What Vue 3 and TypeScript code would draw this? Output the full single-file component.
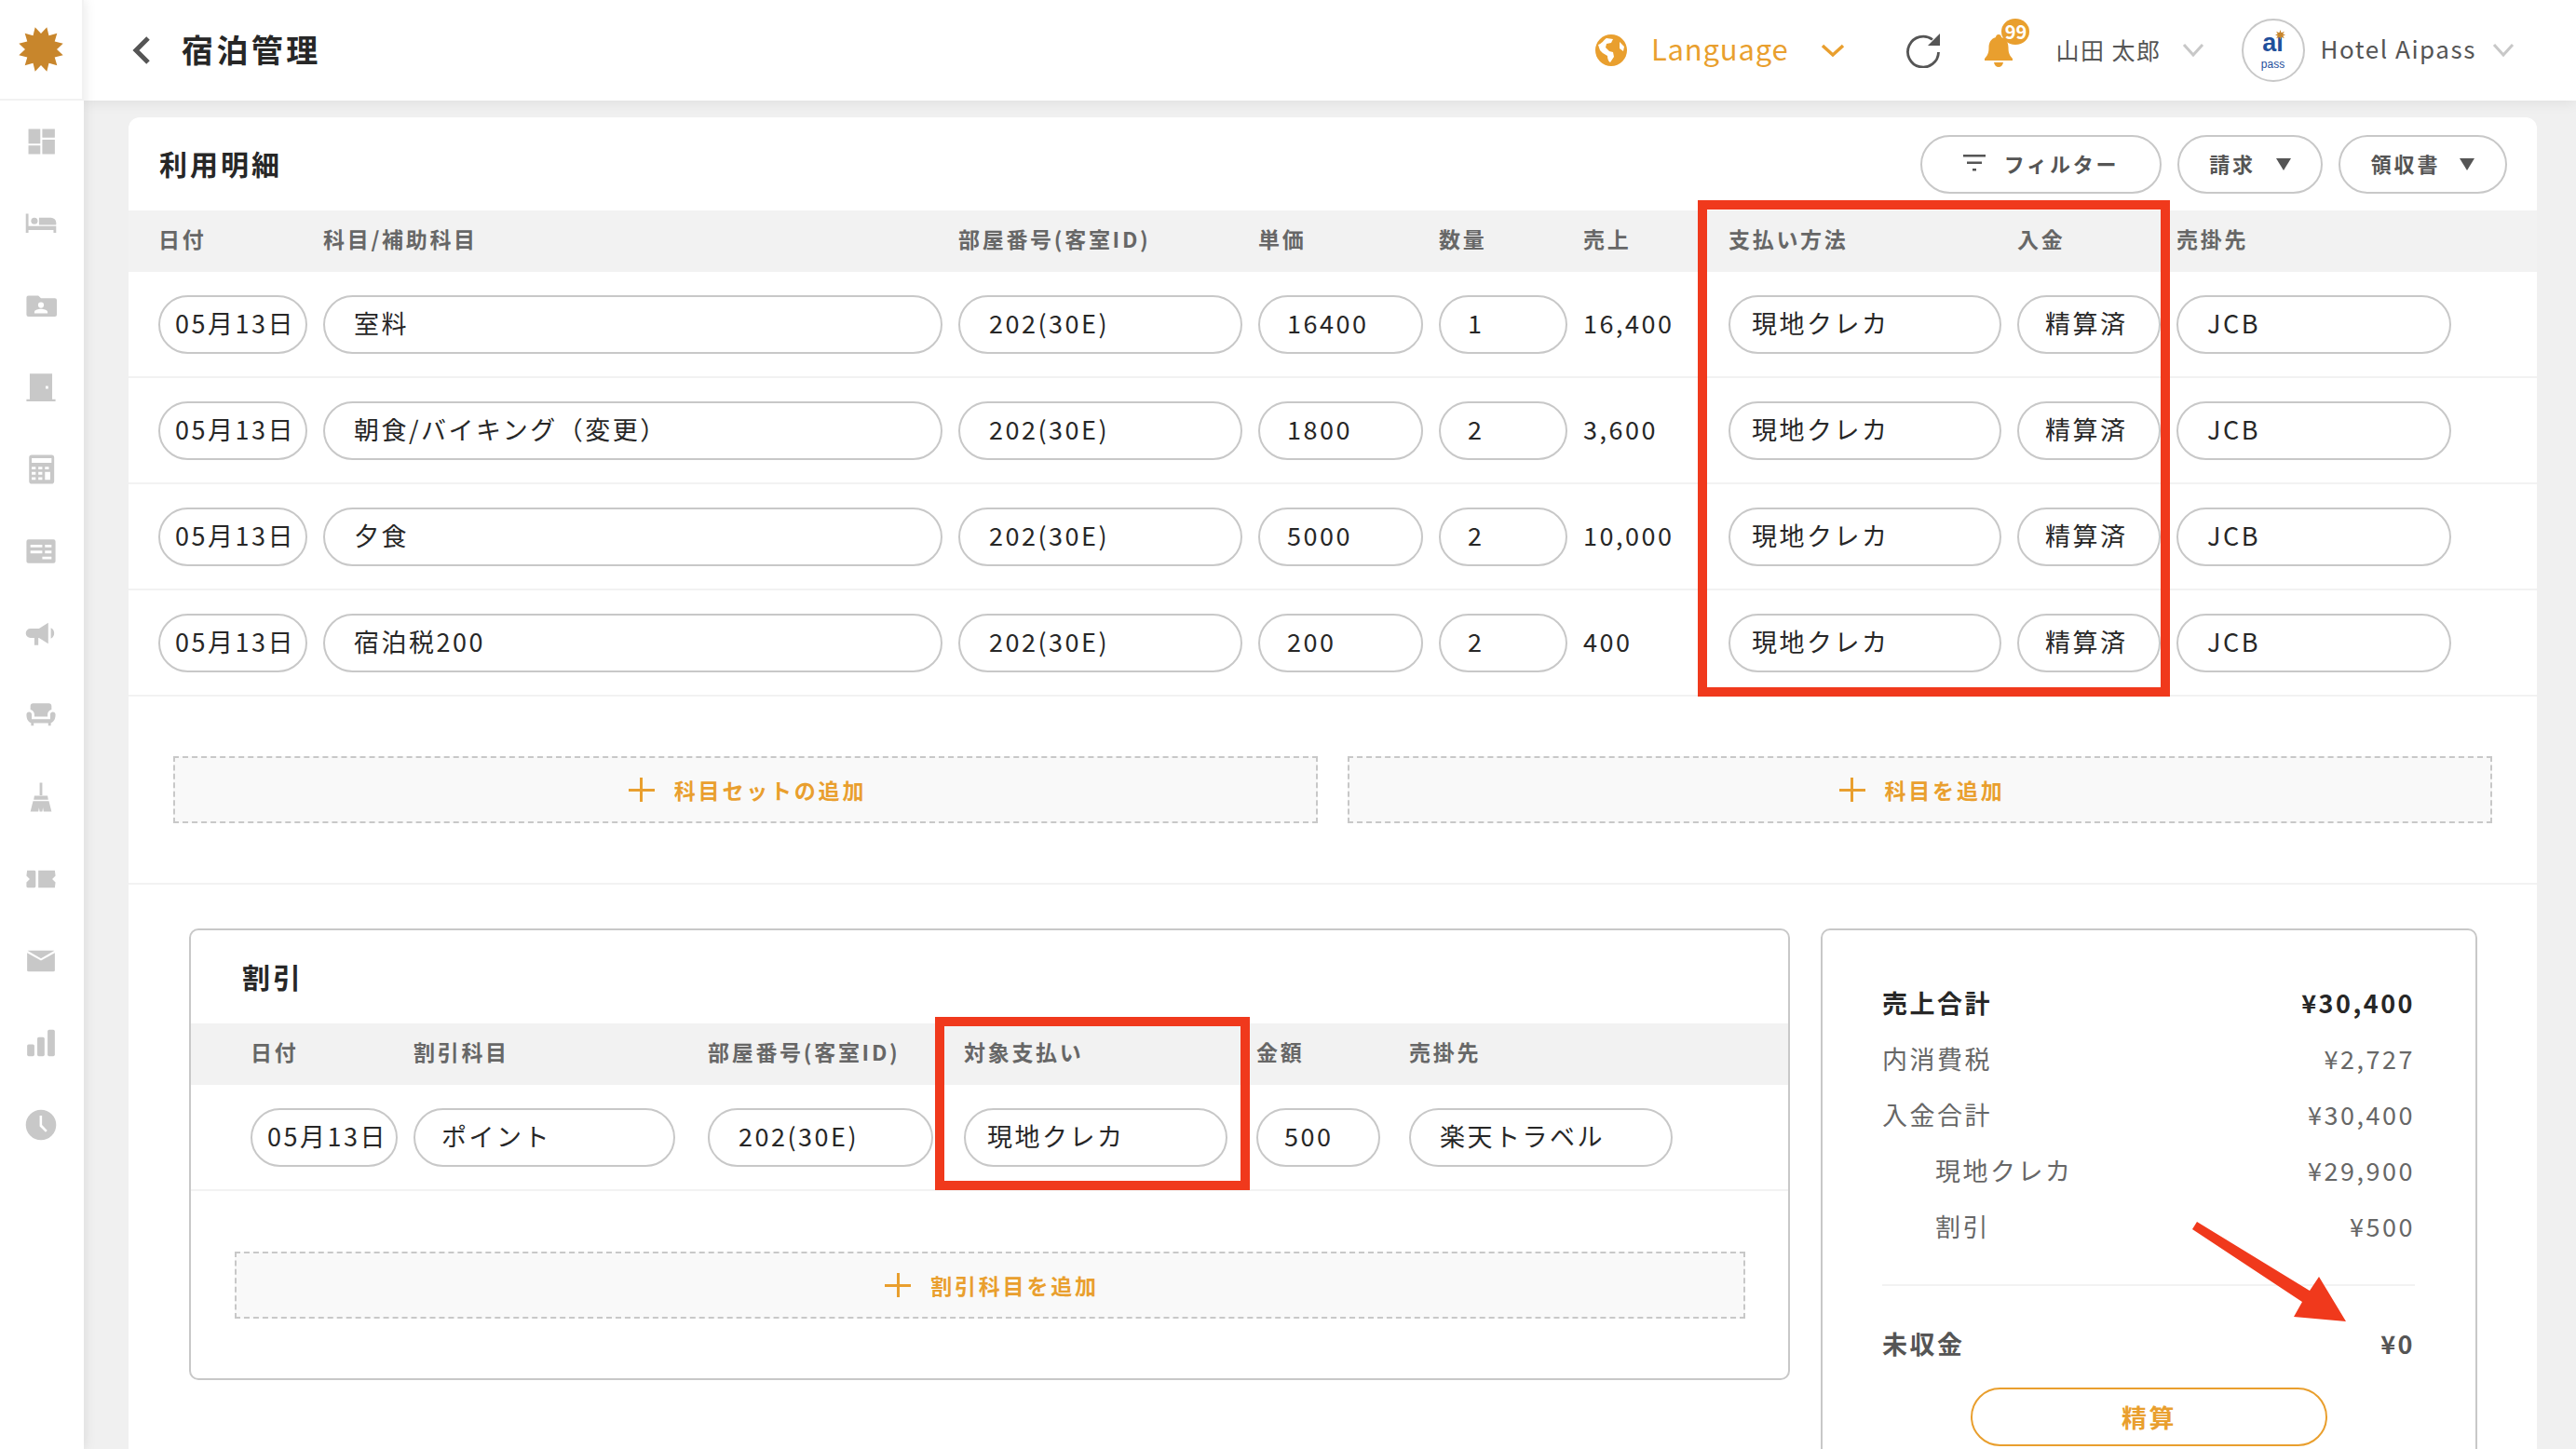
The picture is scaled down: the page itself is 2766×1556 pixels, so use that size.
<script setup lang="ts">
interface Line { name: string; price: string; qty: string; sales: string }

const lines: Line[] = [
  { name: '室料', price: '16400', qty: '1', sales: '16,400' },
  { name: '朝食/バイキング（変更）', price: '1800', qty: '2', sales: '3,600' },
  { name: '夕食', price: '5000', qty: '2', sales: '10,000' },
  { name: '宿泊税200', price: '200', qty: '2', sales: '400' },
]

// logo: 12 pointed star
const starPoints = Array.from({ length: 24 }, (_, i) => {
  const r = i % 2 === 0 ? 24.5 : 17
  const a = (i * Math.PI) / 12 - Math.PI / 2 + Math.PI / 12
  return `${(25 + r * Math.cos(a)).toFixed(1)},${(25 + r * Math.sin(a)).toFixed(1)}`
}).join(' ')
</script>

<template>
  <div class="app">
    <aside class="side">
      <div class="logo">
        <svg width="50" height="50" viewBox="0 0 50 50"><polygon :points="starPoints" fill="#c8862c" /></svg>
      </div>
      <nav class="nav">
        <div class="nav-item"><svg viewBox="0 0 24 24"><path d="M2.500 2.500h9v11h-9zM2.500 15h9v6.500h-9zM13 2.500h9.500V9H13zM13 10.500h9.500v11H13z" /></svg></div>
        <div class="nav-item"><svg viewBox="0 0 24 24"><path d="M0.500 4.500h2v9.500h21v5h-2v-2H2.500v2h-2z" /><circle cx="7" cy="10" r="2.500" /><path d="M10.500 7.500h9a4 4 0 0 1 4 4V13h-13z" /></svg></div>
        <div class="nav-item"><svg viewBox="0 0 24 24"><path fill-rule="evenodd" d="M22 6.500h-10l-2-2H2.500a1.500 1.500 0 0 0-1.500 1.500v13a1.500 1.500 0 0 0 1.500 1.500h20a1.500 1.500 0 0 0 1.500-1.500V8a1.500 1.500 0 0 0-1.500-1.500zM12 9.500a2.200 2.200 0 1 1 0 4.400 2.200 2.200 0 0 1 0-4.400zM17 18H7v-1c0-1.600 3.300-2.300 5-2.300s5 .7 5 2.300z" /></svg></div>
        <div class="nav-item"><svg viewBox="0 0 24 24"><path fill-rule="evenodd" d="M3.500 1.500h17V21H23v1.500H1V21h2.500zM15.500 11h2v2h-2z" /></svg></div>
        <div class="nav-item"><svg viewBox="0 0 24 24"><path fill-rule="evenodd" d="M5 1h15a2 2 0 0 1 2 2v18a2 2 0 0 1-2 2H5a2 2 0 0 1-2-2V3a2 2 0 0 1 2-2zM5 3.500v3.500h15V3.500zM5 10v2h3v-2zM10 10v2h3v-2zM15 10v2h3v-2zM5 14v2h3v-2zM10 14v2h3v-2zM15 14v6h4v-6zM5 18v2h3v-2zM10 18v2h3v-2z" /></svg></div>
        <div class="nav-item"><svg viewBox="0 0 24 24"><path fill-rule="evenodd" d="M2.500 3h19A1.500 1.500 0 0 1 23 4.500v15a1.500 1.500 0 0 1-1.500 1.500h-19A1.500 1.500 0 0 1 1 19.500v-15A1.500 1.500 0 0 1 2.500 3zM4 7v2h9V7zM4 11.500v2h9v-2zM15 7v2h5V7zM15 11.500v2h5v-2zM13 16v2h7v-2z" /></svg></div>
        <div class="nav-item"><svg viewBox="0 0 24 24"><path d="M4 8.500a3.500 3.500 0 0 0 0 7h3V21h3v-5.500h.5L17.500 20V4l-7 4.500zM19.500 8v8c1.700-.8 2.500-2.300 2.500-4s-.8-3.200-2.500-4z" /></svg></div>
        <div class="nav-item"><svg viewBox="0 0 24 24"><path d="M21 9.500c-1.100 0-2 .9-2 2V15H5v-3.500c0-1.100-.9-2-2-2s-2 .9-2 2c0 3 1 5.500 3.500 6.500v2h2v-2h11v2h2v-2c2.500-1 3.500-3.500 3.500-6.500 0-1.100-.9-2-2-2zM18 3H6C4.900 3 4 3.900 4 5v2.800c1.900.5 3 1.900 3 3.700V13h10v-1.500c0-1.800 1.100-3.200 3-3.700V5c0-1.100-.9-2-2-2z" /></svg></div>
        <div class="nav-item"><svg viewBox="0 0 24 24"><path d="M11 1h2v9.500h-2zM7 11h10l.5 3h-11zM6 15h12l2 8h-6l-.5-3-.5 3h-2l-.5-3-.5 3H4z" /></svg></div>
        <div class="nav-item"><svg viewBox="0 0 24 24"><path d="M1.500 5.500H7a1 1 0 0 1 1 1v11a1 1 0 0 1-1 1H2a1 1 0 0 1-1-1V14.500l2.500-2.500L1 9.500zM10 5.500h12.500L23 9.500 20.500 12l2.500 2.500-.5 4H10z" /></svg></div>
        <div class="nav-item"><svg viewBox="0 0 24 24"><path d="M1.500 5.800 12 11.700 22.500 5.800V19a1 1 0 0 1-1 1h-19a1 1 0 0 1-1-1zM2 4h20v.2L12 10 2 4.200z" /></svg></div>
        <div class="nav-item"><svg viewBox="0 0 24 24"><rect x="1.500" y="13" width="5.500" height="9" rx="1.200" /><rect x="9.200" y="7.500" width="5.500" height="14.500" rx="1.200" /><rect x="17" y="2" width="5.500" height="20" rx="1.200" /></svg></div>
        <div class="nav-item"><svg viewBox="0 0 24 24"><path fill-rule="evenodd" d="M12 0.500a11.500 11.500 0 1 1 0 23 11.500 11.500 0 0 1 0-23zM11 5v8l4.500 4.500 1.300-1.300-4-4.200V5z" /></svg></div>
      </nav>
    </aside>

    <div class="main">
      <header class="top">
        <svg class="back" width="20" height="32" viewBox="0 0 20 32"><path d="M17 3 4 16l13 13" fill="none" stroke="#555" stroke-width="5" /></svg>
        <h1 class="page-title">宿泊管理</h1>
        <div class="top-right">
          <svg class="globe" width="36" height="36" viewBox="0 0 36 36">
            <circle cx="18" cy="18" r="17" fill="#e99f2e" />
            <path d="M4 12c4-1 6-5 9-7l7 1-2 4-5 1-1 4 4 4 4 1 1 5-4 6c-2-1-3-4-3-7l-5-3-3-3zM27 9l5 5-1 5-4-3z" fill="#fff" />
          </svg>
          <span class="lang">Language</span>
          <svg class="lang-chev" width="26" height="15" viewBox="0 0 26 15"><path d="M2 2l11 10L24 2" fill="none" stroke="#e99f2e" stroke-width="3.500" /></svg>
          <svg class="reload" width="40" height="38" viewBox="0 0 40 38">
            <path d="M30 7.500A16.500 16.500 0 1 0 36.500 21" fill="none" stroke="#555" stroke-width="2.800" />
            <path d="M38 1v13H25z" fill="#555" />
          </svg>
          <div class="bell">
            <svg width="32" height="36" viewBox="0 0 32 36">
              <path d="M16 1c2 0 3 1.500 3 3 5 1.500 7.500 5.500 7.500 11 0 5.500 1 8 4.500 12v2H1v-2c3.500-4 4.500-6.500 4.500-12C5.500 9.500 8 5.500 13 4c0-1.500 1-3 3-3z" fill="#e99f2e" />
              <path d="M11 31h10c-.5 3-2.500 5-5 5s-4.500-2-5-5z" fill="#e99f2e" />
            </svg>
            <span class="badge">99</span>
          </div>
          <span class="user">山田 太郎</span>
          <svg class="grey-chev user-chev" width="24" height="14" viewBox="0 0 24 14"><path d="M2 1l10 11L22 1" fill="none" stroke="#c8c8c8" stroke-width="3" /></svg>
          <div class="avatar">
            <svg class="avatar-star" width="11" height="11" viewBox="0 0 10 10"><polygon points="5,0 6,3 9,1.500 7.500,4 10,5 7.500,6 9,8.500 6,7 5,10 4,7 1,8.500 2.500,6 0,5 2.500,4 1,1.500 4,3" fill="#c8862c" /></svg>
            <span class="ai">ai</span>
            <span class="pass">pass</span>
          </div>
          <span class="hotel">Hotel Aipass</span>
          <svg class="grey-chev hotel-chev" width="24" height="14" viewBox="0 0 24 14"><path d="M2 1l10 11L22 1" fill="none" stroke="#c8c8c8" stroke-width="3" /></svg>
        </div>
      </header>

      <div class="content">
        <section class="card">
          <div class="card-head">
            <h2 class="card-title">利用明細</h2>
            <div class="actions">
              <button class="act act-filter">
                <svg width="24" height="18" viewBox="0 0 24 18"><path d="M0 0h24v2.500H0zM4 7.500h16V10H4zM10 15h4v2.500h-4z" fill="#555" /></svg>
                フィルター
              </button>
              <button class="act act-bill">請求<i class="caret" /></button>
              <button class="act act-receipt">領収書<i class="caret" /></button>
            </div>
          </div>

          <div class="grid thead">
            <span>日付</span><span>科目/補助科目</span><span>部屋番号(客室ID)</span><span>単価</span><span>数量</span><span>売上</span><span>支払い方法</span><span>入金</span><span>売掛先</span>
          </div>
          <div v-for="line in lines" :key="line.name" class="grid row">
            <div class="pill pill-date">05月13日</div>
            <div class="pill pad-33">{{ line.name }}</div>
            <div class="pill pad-33">202(30E)</div>
            <div class="pill pad-31">{{ line.price }}</div>
            <div class="pill pad-31">{{ line.qty }}</div>
            <div class="cell-text">{{ line.sales }}</div>
            <div class="pill pad-24">現地クレカ</div>
            <div class="pill pad-30">精算済</div>
            <div class="pill pad-33">JCB</div>
          </div>

          <div class="add-row">
            <button class="add"><span class="plus" />科目セットの追加</button>
            <button class="add"><span class="plus" />科目を追加</button>
          </div>

          <div class="lower">
            <section class="panel discount">
              <h3 class="panel-title">割引</h3>
              <div class="dgrid thead">
                <span>日付</span><span>割引科目</span><span>部屋番号(客室ID)</span><span>対象支払い</span><span>金額</span><span>売掛先</span>
              </div>
              <div class="dgrid row">
                <div class="cell"><div class="pill pill-date">05月13日</div></div>
                <div class="cell"><div class="pill pad-30">ポイント</div></div>
                <div class="cell"><div class="pill pad-33">202(30E)</div></div>
                <div class="cell"><div class="pill pad-24">現地クレカ</div></div>
                <div class="cell"><div class="pill pad-30">500</div></div>
                <div class="cell"><div class="pill pad-33">楽天トラベル</div></div>
              </div>
              <div class="add-single">
                <button class="add"><span class="plus" />割引科目を追加</button>
              </div>
              <div class="mark mark-discount" />
            </section>

            <section class="panel summary">
              <div class="sum-row strong"><span>売上合計</span><span>¥30,400</span></div>
              <div class="sum-row"><span>内消費税</span><span>¥2,727</span></div>
              <div class="sum-row"><span>入金合計</span><span>¥30,400</span></div>
              <div class="sum-row indent"><span>現地クレカ</span><span>¥29,900</span></div>
              <div class="sum-row indent"><span>割引</span><span>¥500</span></div>
              <div class="sum-row due"><span>未収金</span><span>¥0</span></div>
              <button class="settle">精算</button>
            </section>
          </div>

          <div class="mark mark-pay" />
          <svg class="arrow" width="190" height="130" viewBox="0 0 190 130">
            <polygon points="19,12 140,86 150,71 179,119 123,114 132,98 14,20" fill="#f0391c" />
          </svg>
        </section>
      </div>
    </div>
  </div>
</template>

<style>
html, body { margin: 0; background: #f0f0f0; }
</style>

<style scoped>
.app {
  display: flex;
  width: 2766px;
  height: 1556px;
  overflow: hidden;
  background: #f0f0f0;
  font-family: "Noto Sans CJK JP", "Noto Sans", sans-serif;
  color: #272727;
  letter-spacing: 2.5px;
}
button { font-family: inherit; letter-spacing: inherit; cursor: pointer; }
h1, h2, h3 { margin: 0; }

.side {
  position: relative;
  z-index: 3;
  flex: 0 0 90px;
  background: #fff;
  box-shadow: 2px 0 12px rgba(0, 0, 0, .08);
}
.logo {
  height: 106px;
  border-bottom: 2px solid #f2f2f2;
  border-right: 2px solid #f2f2f2;
  display: flex;
  align-items: center;
  justify-content: center;
}
.nav-item {
  height: 88px;
  padding-right: 2px;
  display: flex;
  align-items: center;
  justify-content: center;
}
.nav-item svg { width: 34px; height: 34px; fill: #c8c8c8; }

.main { flex: 1; min-width: 0; display: flex; flex-direction: column; }
.top {
  position: relative;
  z-index: 2;
  height: 108px;
  flex: none;
  display: flex;
  align-items: center;
  background: #fff;
  box-shadow: 0 2px 14px rgba(0, 0, 0, .08);
}
.back { margin-left: 52px; }
.page-title { margin-left: 33px; padding-bottom: 3px; font-size: 34px; font-weight: 700; letter-spacing: 3.4px; line-height: 1; }
.top-right { margin-left: auto; display: flex; align-items: center; height: 100%; }
.lang { margin-left: 25px; padding-bottom: 5px; font-size: 31px; color: #e99f2e; letter-spacing: .8px; }
.lang-chev { margin-left: 35px; }
.reload { margin-left: 64px; }
.bell { position: relative; margin-left: 45px; width: 32px; height: 36px; }
.badge {
  position: absolute;
  left: 19px;
  top: -16px;
  width: 30px;
  height: 28px;
  border-radius: 50%;
  background: #e99f2e;
  color: #fff;
  font-size: 20px;
  font-weight: 700;
  letter-spacing: 0;
  line-height: 28px;
  text-align: center;
}
.user { margin-left: 45px; padding-bottom: 3px; font-size: 25px; color: #555; letter-spacing: 1.500px; }
.grey-chev { margin-left: 27px; }
.user-chev { margin-left: 22px; }
.avatar {
  position: relative;
  margin-left: 40px;
  width: 68px;
  height: 68px;
  box-sizing: border-box;
  border: 2px solid #c8c8c8;
  border-radius: 50%;
  padding-top: 9px;
  display: flex;
  flex-direction: column;
  align-items: center;
  color: #1f4f9c;
  font-family: "Liberation Sans", sans-serif;
  letter-spacing: 0;
}
.avatar-star { position: absolute; top: 10px; left: 34px; }
.ai { font-size: 27px; font-weight: 700; line-height: 31px; }
.pass { font-size: 12px; line-height: 14px; }
.hotel { margin-left: 17px; padding-bottom: 5px; font-size: 26px; color: #555; letter-spacing: 1.550px; }
.hotel-chev { margin-left: 17px; margin-right: 66px; }

.content { flex: 1; min-height: 0; padding: 18px 42px 0 48px; display: flex; }
.card {
  position: relative;
  flex: 1;
  background: #fff;
  border-radius: 12px 12px 0 0;
}
.card-head { height: 100px; display: flex; align-items: center; justify-content: space-between; padding: 0 32px 0 33px; }
.card-title { padding-bottom: 3px; font-size: 30px; font-weight: 700; letter-spacing: 3px; line-height: 1; }
.actions { display: flex; gap: 17px; }
.act {
  height: 63px;
  box-sizing: border-box;
  border: 2px solid #c8c8c8;
  border-radius: 32px;
  background: #fff;
  color: #555;
  font-size: 22px;
  font-weight: 700;
  letter-spacing: 2.800px;
  display: flex;
  align-items: center;
  justify-content: center;
  padding: 0 0 3px;
}
.act-filter { width: 259px; gap: 20px; }
.act-bill { width: 156px; gap: 22px; }
.act-receipt { width: 181px; gap: 21px; }
.caret {
  width: 0;
  height: 0;
  margin-top: 3px;
  border-left: 8px solid transparent;
  border-right: 8px solid transparent;
  border-top: 13px solid #555;
}

.grid {
  display: grid;
  grid-template-columns: 160px 665px 305px 177px 138px 139px 293px 154px 295px;
  column-gap: 17px;
  padding-left: 32px;
  align-items: center;
}
.dgrid {
  display: grid;
  grid-template-columns: 175px 316px 275px 314px 164px 283px;
  padding-left: 64px;
  align-items: center;
}
.dgrid .cell:nth-child(1) { padding-right: 17px; }
.dgrid .cell:nth-child(2) { padding-right: 35px; }
.dgrid .cell:nth-child(3) { padding-right: 33px; }
.dgrid .cell:nth-child(4) { padding-right: 31px; }
.dgrid .cell:nth-child(5) { padding-right: 31px; }
.thead {
  height: 66px;
  box-sizing: border-box;
  padding-bottom: 6px;
  background: #f2f2f2;
  color: #676767;
  font-size: 23px;
  font-weight: 700;
  letter-spacing: 2.700px;
}
.row {
  height: 114px;
  box-sizing: border-box;
  border-bottom: 2px solid #f2f2f2;
  font-size: 27px;
}
.pill {
  height: 63px;
  box-sizing: border-box;
  border: 2px solid #c8c8c8;
  border-radius: 32px;
  padding-bottom: 3px;
  display: flex;
  align-items: center;
  white-space: nowrap;
  background: #fff;
}
.pill-date { padding-left: 16px; }
.pad-33 { padding-left: 31px; }
.pad-31 { padding-left: 29px; }
.pad-30 { padding-left: 28px; }
.pad-24 { padding-left: 23px; }
.cell-text { white-space: nowrap; padding-bottom: 3px; }

.add-row { display: flex; gap: 32px; padding: 64px 48px 64px; border-bottom: 2px solid #f2f2f2; }
.add {
  flex: 1;
  height: 72px;
  box-sizing: border-box;
  border: 2px dashed #c8c8c8;
  background: #f9f9f9;
  color: #e99f2e;
  font-size: 23px;
  font-weight: 700;
  letter-spacing: 2.800px;
  display: flex;
  align-items: center;
  justify-content: center;
  gap: 21px;
  padding: 0 0 0 4px;
}
.plus {
  position: relative;
  width: 28px;
  height: 26px;
  background:
    linear-gradient(#e99f2e, #e99f2e) center / 28px 3px no-repeat,
    linear-gradient(#e99f2e, #e99f2e) center / 3px 26px no-repeat;
}

.lower { display: flex; gap: 33px; padding: 47px 64px 0 65px; }
.panel {
  position: relative;
  box-sizing: border-box;
  border: 2px solid #c8c8c8;
  border-radius: 10px;
  background: #fff;
}
.discount { width: 1719px; height: 485px; }
.panel-title { height: 100px; box-sizing: border-box; padding: 0 0 3px 55px; display: flex; align-items: center; font-size: 30px; font-weight: 700; letter-spacing: 3px; }
.add-single { display: flex; padding: 65px 46px 0 47px; }

.summary { width: 705px; height: 620px; padding: 47px 65px 0 64px; }
.sum-row {
  height: 60px;
  display: flex;
  align-items: center;
  justify-content: space-between;
  font-size: 27px;
  color: #676767;
}
.sum-row.strong { font-weight: 700; color: #272727; }
.sum-row.indent { padding-left: 57px; }
.sum-row.due {
  height: 66px;
  margin-top: 33px;
  padding-top: 28px;
  border-top: 2px solid #f2f2f2;
  font-weight: 700;
  color: #555;
}
.settle {
  display: block;
  margin: 15px 0 0 95px;
  width: 383px;
  height: 63px;
  box-sizing: border-box;
  border: 2px solid #e99f2e;
  border-radius: 32px;
  background: #fff;
  color: #e99f2e;
  font-size: 27px;
  font-weight: 700;
}

.mark { position: absolute; border: 10px solid #f0391c; box-sizing: border-box; pointer-events: none; }
.mark-pay { left: 1685px; top: 89px; width: 507px; height: 533px; }
.mark-discount { left: 799px; top: 93px; width: 338px; height: 186px; }
.arrow { position: absolute; left: 2202px; top: 1174px; }
</style>
